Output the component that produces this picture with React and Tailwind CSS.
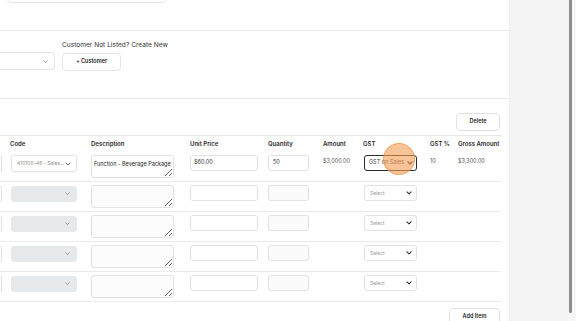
import React from "react";

const Chevron = ({ className = "", stroke = "#555", sw = 1.6 }) => (
  <svg viewBox="0 0 10 6" className={className} fill="none">
    <path d="M1.5 1.2 L5 4.6 L8.5 1.2" stroke={stroke} strokeWidth={sw} strokeLinecap="round" strokeLinejoin="round" />
  </svg>
);

const cols = {
  c0: "w-[11px]",
  code: "w-[80px]",
  desc: "w-[99px]",
  price: "w-[78px]",
  qty: "w-[55px]",
  amt: "w-[40px]",
  gst: "w-[67px]",
  pct: "w-[28px]",
  gross: "w-[43px]",
};

function Row({ first }) {
  return (
    <div className={`flex items-start border-b border-[#ebebeb] ${first ? "pt-[4px] pb-[3px]" : "pt-[3px] pb-[3px]"}`}>
      <div className={`${cols.c0} shrink-0`}>
        <div className="mt-[1px] h-[16px] w-[2px] rounded-r-[3px] border border-l-0 border-[#e2e2e2]" />
      </div>
      <div className={`${cols.code} shrink-0`}>
        {first ? (
          <div className="flex h-[17px] w-[66px] items-center justify-between rounded-[3px] border border-[#e4e4e4] bg-white pl-[5px] pr-[5px] shadow-[0_1px_1px_rgba(0,0,0,0.03)]">
            <span className="text-[5px] leading-none text-[#8a8a8a]">410100-45 - Sales...</span>
            <Chevron className="h-[4px] w-[6px]" stroke="#555" sw={1.5} />
          </div>
        ) : (
          <div className="mt-[1px] flex h-[16px] w-[66px] items-center justify-end rounded-[3px] bg-[#e6e9ec] pr-[7px]">
            <Chevron className="h-[3.5px] w-[5px]" stroke="#80858c" sw={1.5} />
          </div>
        )}
      </div>
      <div className={`${cols.desc} shrink-0`}>
        <textarea
          readOnly
          wrap="off"
          value={first ? "Function - Beverage Package" : ""}
          className={`block h-[23px] w-[83px] resize overflow-hidden rounded-[3px] border border-[#e2e2e2] px-[2px] pt-[4px] pb-[2px] text-[5.5px] leading-[8px] text-[#222] outline-none ${first ? "bg-white" : "bg-[#fcfcfc]"}`}
        />
      </div>
      <div className={`${cols.price} shrink-0`}>
        <div className="flex h-[16px] w-[68px] items-center rounded-[3px] border border-[#e2e2e2] bg-white px-[3px]">
          <span className="text-[5.5px] leading-none text-[#333]">{first ? "$60.00" : ""}</span>
        </div>
      </div>
      <div className={`${cols.qty} shrink-0`}>
        <div className={`flex h-[16px] w-[41px] items-center rounded-[3px] border border-[#e2e2e2] px-[4px] ${first ? "bg-white" : "bg-[#fbfbfb]"}`}>
          <span className="text-[5.5px] leading-none text-[#333]">{first ? "50" : ""}</span>
        </div>
      </div>
      <div className={`${cols.amt} shrink-0 pt-[4px] text-[5.5px] leading-none text-[#555]`}>{first ? "$3,000.00" : ""}</div>
      <div className={`${cols.gst} shrink-0`}>
        {first ? (
          <div className="ml-[1px] flex h-[16px] w-[53px] items-center justify-between rounded-[3px] border-[1.5px] border-[#2a2a2a] bg-white pl-[4px] pr-[3px]">
            <span className="text-[5.5px] leading-none text-[#444]">GST on Sales</span>
            <Chevron className="h-[4px] w-[6px]" stroke="#222" sw={2} />
          </div>
        ) : (
          <div className="ml-[1px] flex h-[16px] w-[53px] items-center justify-between rounded-[3px] border border-[#e2e2e2] bg-white pl-[5px] pr-[4px]">
            <span className="text-[5px] leading-none text-[#9a9a9a]">Select</span>
            <Chevron className="h-[4px] w-[6px]" stroke="#333" sw={1.8} />
          </div>
        )}
      </div>
      <div className={`${cols.pct} shrink-0 pt-[4px] text-[5.5px] leading-none text-[#555]`}>{first ? "10" : ""}</div>
      <div className={`${cols.gross} shrink-0 pt-[4px] text-[5.5px] leading-none text-[#555]`}>{first ? "$3,300.00" : ""}</div>
    </div>
  );
}

export default function App() {
  const head = "text-[6px] font-semibold leading-none text-[#2a2a2a]";
  return (
    <div className="flex h-[321px] w-[576px] overflow-hidden bg-white font-['Inter',sans-serif]">
      <div className="relative flex w-[509px] shrink-0 flex-col">
        {/* section 1 */}
        <div className="h-[31px] shrink-0 border-b border-[#ececec]">
          <div className="-mt-[20px] ml-[7px] h-[23px] w-[160px] rounded-[4px] border border-[#e6e6e6]" />
        </div>
        {/* section 2 */}
        <div className="flex h-[68px] shrink-0 gap-[7px] border-b border-[#ececec] pt-[9px]">
          <div className="flex flex-col justify-end">
            <div className="mb-[28px] flex h-[18px] w-[65px] -ml-[10px] items-center justify-end rounded-[4px] border border-[#e4e4e4] pr-[6px]">
              <Chevron className="h-[3px] w-[5px]" stroke="#666" sw={1.3} />
            </div>
          </div>
          <div className="flex flex-col">
            <div className="text-[6.6px] leading-[10px] text-[#333]">Customer Not Listed? Create New</div>
            <div className="mt-[3px] flex h-[18px] w-[59px] items-center justify-center rounded-[4px] border border-[#e4e4e4] bg-white">
              <span className="text-[5.5px] font-semibold leading-none text-[#222]">+ Customer</span>
            </div>
          </div>
        </div>
        {/* section 3 */}
        <div className="flex flex-col">
          <div className="flex justify-end pr-[9px] pt-[14px]">
            <div className="flex h-[18px] w-[44px] items-center justify-center rounded-[4px] border border-[#e2e2e2] bg-white">
              <span className="text-[5.5px] font-semibold leading-none text-[#222]">Delete</span>
            </div>
          </div>
          <div className="mt-[4px] w-[501px] border-t border-[#e6e6e6]">
            <div className="flex h-[15px] items-center">
              <div className={`${cols.c0} shrink-0`} />
              <div className={`${cols.code} shrink-0 ${head} -ml-[1px]`}>Code</div>
              <div className={`${cols.desc} shrink-0 ${head} ml-[1px]`}>Description</div>
              <div className={`${cols.price} shrink-0 ${head}`}>Unit Price</div>
              <div className={`${cols.qty} shrink-0 ${head}`}>Quantity</div>
              <div className={`${cols.amt} shrink-0 ${head}`}>Amount</div>
              <div className={`${cols.gst} shrink-0 ${head}`}>GST</div>
              <div className={`${cols.pct} shrink-0 ${head}`}>GST %</div>
              <div className={`${cols.gross} shrink-0 ${head} whitespace-nowrap`}>Gross Amount</div>
            </div>
            <Row first />
            <Row />
            <Row />
            <Row />
            <Row />
          </div>
          <div className="flex justify-end pr-[9px] pt-[6px]">
            <div className="flex h-[18px] w-[51px] items-center justify-center rounded-[4px] border border-[#e2e2e2] bg-white">
              <span className="text-[5.5px] font-semibold leading-none text-[#222]">Add Item</span>
            </div>
          </div>
        </div>
        {/* click highlight */}
        <div className="absolute left-[383px] top-[143px] h-[32px] w-[32px] rounded-full border border-[rgba(236,140,60,0.55)] bg-[rgba(246,158,88,0.62)]" />
      </div>
      <div className="w-[60px] shrink-0 border-l border-[#efefef] bg-[#f4f4f4]" />
      <div className="flex w-[7px] shrink-0 bg-[#f6f6f6]">
        <div className="h-[313px] w-[3px] rounded-b-[2px] bg-[#8c8c8c]" />
      </div>
    </div>
  );
}
